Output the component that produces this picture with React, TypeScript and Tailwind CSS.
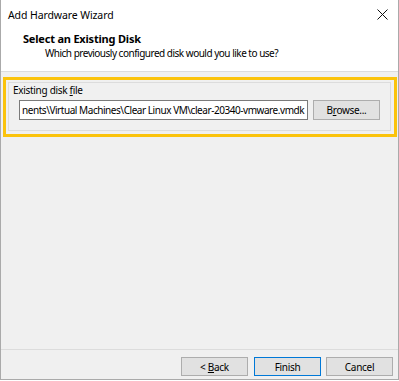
import React from "react";

export default function App() {
  return (
    <div className="w-[399px] h-[381px] bg-white">
      <div className="w-[399px] h-[380px] bg-[#f0f0f0] border-l border-r border-b border-[#aaaaaa] flex flex-col text-[10px] tracking-[-0.3px] leading-[14px] text-black font-['Noto_Sans',sans-serif]">
        {/* Title bar */}
        <div className="h-[30px] bg-white flex items-center pl-[7px] pr-[10px] justify-between">
          <span className="pb-[1px] text-[10.5px] tracking-[-0.1px]">Add Hardware Wizard</span>
          <svg width="11" height="11" viewBox="0 0 11 11" className="mb-[1px]">
            <path d="M0.5 0.5 L10.5 10.5 M10.5 0.5 L0.5 10.5" stroke="#111" strokeWidth="1" fill="none" />
          </svg>
        </div>
        {/* Header */}
        <div className="h-[42px] bg-white border-b border-[#dcdcdc] flex flex-col pt-[2px]">
          <div className="pl-[22px] font-bold text-[11px] tracking-[-0.2px]">Select an Existing Disk</div>
          <div className="pl-[44px] tracking-[-0.5px]">Which previously configured disk would you like to use?</div>
        </div>
        {/* Body */}
        <div className="flex-1 pt-[5px] pl-[2px] pr-[1px]">
          <div className="border-[3px] border-[#fbc30b] h-[60px] pt-[2px] pl-[2px] pr-[3px] pb-[3px]">
            <div className="border border-[#dcdcdc] h-full flex flex-col">
              <div className="pl-[4px] h-[14px]">
                Existing disk <u>f</u>ile
              </div>
              <div className="flex items-start pl-[10px] pt-[3px] gap-[5px]">
                <div className="w-[289px] h-[20px] bg-white border border-[#7a7a7a] overflow-hidden flex items-center justify-start pl-[2px] whitespace-nowrap">
                  <span className="tracking-[-0.45px]">nents\Virtual Machines\Clear Linux VM\clear-20340-vmware.vmdk</span>
                </div>
                <button className="w-[67px] h-[20px] bg-[#e1e1e1] border border-[#adadad] flex items-center justify-center">
                  <span>
                    B<u>r</u>owse...
                  </span>
                </button>
              </div>
            </div>
          </div>
        </div>
        {/* Footer */}
        <div className="h-[30px] border-t border-[#dcdcdc] flex justify-end items-start pt-[7px] pr-[5px]">
          <button className="w-[67px] h-[19px] bg-[#e1e1e1] border border-[#adadad] flex items-center justify-center">
            <span>
              &lt; <u>B</u>ack
            </span>
          </button>
          <button className="ml-[6px] w-[67px] h-[19px] bg-[#e1e1e1] border border-[#0078d7] flex items-center justify-center">
            Finish
          </button>
          <button className="ml-[5px] w-[67px] h-[19px] bg-[#e1e1e1] border border-[#adadad] flex items-center justify-center">
            Cancel
          </button>
        </div>
      </div>
    </div>
  );
}
